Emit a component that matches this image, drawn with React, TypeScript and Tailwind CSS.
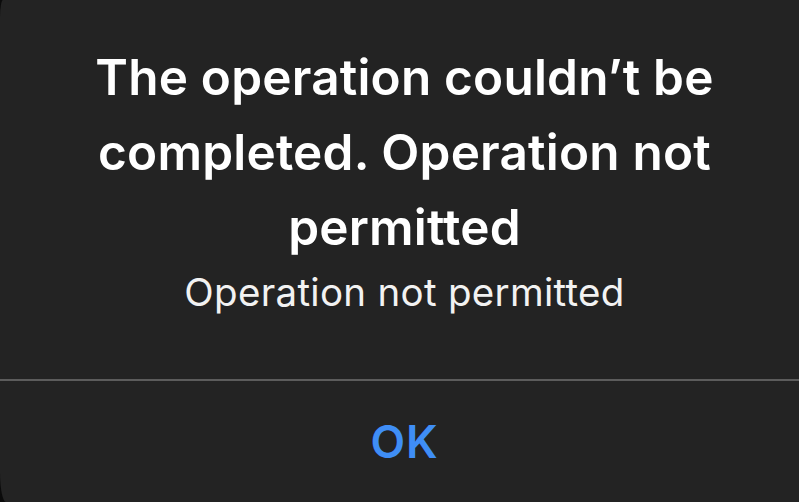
export default function App() {
  return (
    <div className="w-[799px] h-[502px] bg-[#0b0b0b] overflow-hidden" style={{ fontFamily: 'Inter, "Noto Sans", sans-serif' }}>
      <div className="w-full h-full bg-[#232323] rounded-tl-[3px_18px] rounded-bl-[6px_30px] flex flex-col pl-[10px]">
        <div className="flex-1 flex flex-col items-center pt-[40px]">
          <h1 className="text-white text-[49.5px] font-semibold leading-[75px] text-center w-[680px] tracking-[0.2px]">
            The operation couldn’t be completed. Operation not permitted
          </h1>
          <p className="text-[#f2f2f2] text-[38.5px] leading-[46px] mt-[4px] tracking-[0.3px]">Operation not permitted</p>
        </div>
        <div className="h-[2px] bg-[#5c5c5c] -ml-[10px]" />
        <button className="h-[121px] w-full flex items-center justify-center text-[#3f8ef6] text-[45px] font-semibold tracking-[1px]">
          OK
        </button>
      </div>
    </div>
  )
}
